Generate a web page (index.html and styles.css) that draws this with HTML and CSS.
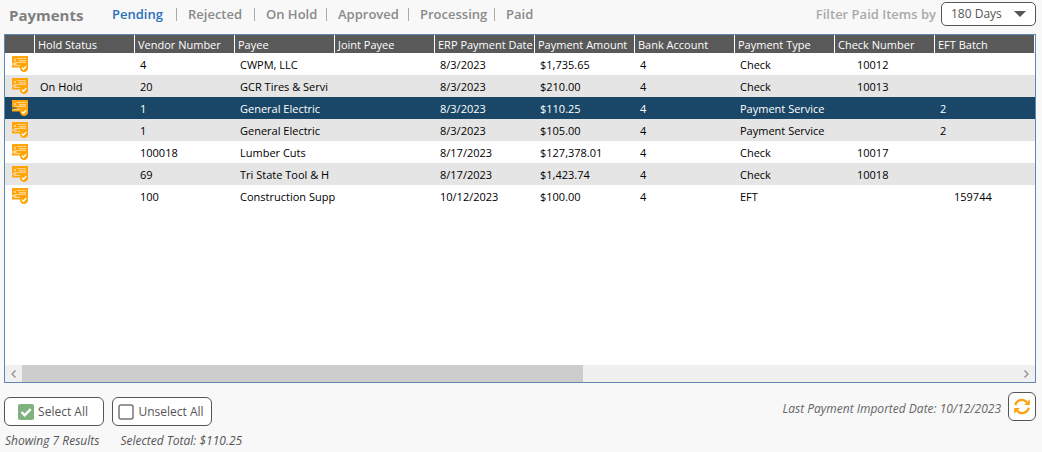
FILE: index.html
```html
<!DOCTYPE html>
<html lang="en">
<head>
<meta charset="utf-8">
<title>Payments</title>
<link rel="stylesheet" href="styles.css">
</head>
<body>
<svg class="defs" aria-hidden="true">
  <symbol id="payment" viewBox="0 0 16 16">
    <path fill="#ffa50a" d="M0 0h16v11H8.500v.5H0V8.500h4.600V7.500H0z"/>
    <path class="lines" d="M2 3h2v2h-2zM5 2h9v1H5zM7 4h7v1.500H7zM2 6h12v1H2zM2 9h6v1H2z"/>
    <circle cx="12" cy="11.700" r="4.200" fill="#ffa50a"/>
    <path fill="none" stroke="#fff" stroke-width="1.300" d="M9.900 11.800l1.500 1.500 2.900-3.200"/>
  </symbol>
</svg>
<header class="toolbar">
  <h1 class="title">Payments</h1>
  <nav class="tabs">
    <a class="tab active" href="#">Pending</a>
    <a class="tab" href="#">Rejected</a>
    <a class="tab" href="#">On Hold</a>
    <a class="tab" href="#">Approved</a>
    <a class="tab" href="#">Processing</a>
    <a class="tab" href="#">Paid</a>
  </nav>
  <label class="filter-label" for="days">Filter Paid Items by</label>
  <div class="select-wrap">
    <select id="days" class="select"><option>180 Days</option></select>
    <svg class="arrow" viewBox="0 0 12 6" aria-hidden="true"><path d="M0 0h12L6 6z" fill="#555"/></svg>
  </div>
</header>
<main class="panel">
  <table class="grid">
    <colgroup><col class="c-icon"><col class="c"><col class="c"><col class="c"><col class="c"><col class="c"><col class="c"><col class="c"><col class="c"><col class="c"><col></colgroup>
    <thead>
      <tr><th></th><th>Hold Status</th><th>Vendor Number</th><th>Payee</th><th>Joint Payee</th><th>ERP Payment Date</th><th>Payment Amount</th><th>Bank Account</th><th>Payment Type</th><th>Check Number</th><th>EFT Batch</th></tr>
    </thead>
    <tbody>
      <tr><td><svg class="icon"><use href="#payment"/></svg></td><td></td><td>4</td><td>CWPM, LLC</td><td></td><td>8/3/2023</td><td>$1,735.65</td><td>4</td><td>Check</td><td class="check">10012</td><td></td></tr>
      <tr><td><svg class="icon"><use href="#payment"/></svg></td><td>On Hold</td><td>20</td><td>GCR Tires &amp; Servi</td><td></td><td>8/3/2023</td><td>$210.00</td><td>4</td><td>Check</td><td class="check">10013</td><td></td></tr>
      <tr class="selected"><td><svg class="icon"><use href="#payment"/></svg></td><td></td><td>1</td><td>General Electric</td><td></td><td>8/3/2023</td><td>$110.25</td><td>4</td><td>Payment Service</td><td></td><td>2</td></tr>
      <tr><td><svg class="icon"><use href="#payment"/></svg></td><td></td><td>1</td><td>General Electric</td><td></td><td>8/3/2023</td><td>$105.00</td><td>4</td><td>Payment Service</td><td></td><td>2</td></tr>
      <tr><td><svg class="icon"><use href="#payment"/></svg></td><td></td><td>100018</td><td>Lumber Cuts</td><td></td><td>8/17/2023</td><td>$127,378.01</td><td>4</td><td>Check</td><td class="check">10017</td><td></td></tr>
      <tr><td><svg class="icon"><use href="#payment"/></svg></td><td></td><td>69</td><td>Tri State Tool &amp; H</td><td></td><td>8/17/2023</td><td>$1,423.74</td><td>4</td><td>Check</td><td class="check">10018</td><td></td></tr>
      <tr><td><svg class="icon"><use href="#payment"/></svg></td><td></td><td>100</td><td>Construction Supp</td><td></td><td>10/12/2023</td><td>$100.00</td><td>4</td><td>EFT</td><td></td><td class="batch">159744</td></tr>
    </tbody>
  </table>
  <div class="scrollbar">
    <button class="scroll-btn" aria-label="Scroll left"><svg width="5" height="8" viewBox="0 0 5 8"><path d="M4.500.5L1 4l3.500 3.500"/></svg></button>
    <div class="track"><div class="thumb"></div></div>
    <button class="scroll-btn" aria-label="Scroll right"><svg width="5" height="8" viewBox="0 0 5 8"><path d="M.5.5L4 4 .5 7.500"/></svg></button>
  </div>
</main>
<footer class="footer">
  <div class="left">
    <div class="buttons">
      <button class="btn"><svg width="16" height="16" viewBox="0 0 16 16"><rect width="16" height="16" rx="2" fill="#7fb27f"/><path d="M3.500 8l3.200 3.200 6-6" fill="none" stroke="#fff" stroke-width="2.400"/></svg>Select All</button>
      <button class="btn"><svg width="16" height="16" viewBox="0 0 16 16"><rect x="1" y="1" width="14" height="14" rx="2" fill="#fff" stroke="#777" stroke-width="1.500"/></svg>Unselect All</button>
    </div>
    <div class="status"><span>Showing 7 Results</span><span>Selected Total: $110.25</span></div>
  </div>
  <div class="right">
    <span class="note">Last Payment Imported Date: 10/12/2023</span>
    <button class="refresh" aria-label="Refresh"><svg width="16" height="17" viewBox="0 0 16 17"><g fill="none" stroke="#ffa010" stroke-width="2.400"><path d="M1.300 7.200A6.600 6.600 0 0 1 12.800 4.300"/><path d="M14.700 9.800A6.600 6.600 0 0 1 3.200 12.700"/></g><path fill="#ffa010" d="M15.800 1.300v5.600h-5.600zM.2 15.700v-5.600h5.600z"/></svg></button>
  </div>
</footer>
</body>
</html>
```
FILE: styles.css
```css
* { box-sizing: border-box; }
html, body { height: 100%; }
body {
  margin: 0;
  padding: 0 6px 0 4px;
  display: flex;
  flex-direction: column;
  background: #f8f8f8;
  color: #000;
  font: 12px/16px "Open Sans", "Noto Sans", sans-serif;
}
button, select { font: inherit; color: #555; }
.defs { position: absolute; width: 0; height: 0; }
.toolbar { display: flex; align-items: center; height: 34px; padding-bottom: 6px; flex: none; }
.title { width: 103px; margin: 0; padding: 2px 0 0 5px; font-size: 15px; line-height: 20px; font-weight: 700; color: #7f7f7f; }
.tabs { display: grid; grid-template-columns: 76px 78px 72px 82px 86px auto; padding-left: 5px; font-size: 13px; line-height: 18px; }
.tab { display: flex; justify-content: space-between; color: #8a8a8a; font-weight: 600; text-decoration: none; }
.tab:not(:last-child)::after { content: ""; width: 1px; height: 13px; margin: 3px 11px 0 0; background: #aaa; }
.tab.active { color: #2a70b8; }
.filter-label { margin-left: auto; margin-right: 5px; color: #aaa; font-size: 13px; font-weight: 600; }
.select-wrap { display: grid; width: 95px; align-items: center; }
.select { grid-area: 1 / 1; appearance: none; width: 100%; height: 24px; padding: 0 9px; border: 1px solid #555; border-radius: 5px; background: #fff; }
.arrow { grid-area: 1 / 1; justify-self: end; width: 12px; height: 6px; margin-right: 10px; pointer-events: none; }

.panel { flex: none; display: flex; flex-direction: column; min-height: 349px; border: 1px solid #5f87b0; background: #fff; }
.grid { width: 100%; table-layout: fixed; border-collapse: separate; border-spacing: 0; font-size: 11px; }
.c-icon { width: 30px; }
.c { width: 100px; }
.grid th { height: 18px; padding: 1px 0 0 3px; border-right: 1px solid #fff; background: #595959; color: #fff; font-weight: 400; text-align: left; line-height: 17px; white-space: nowrap; overflow: hidden; }
.grid td { height: 22px; padding: 1px 0 0 5px; line-height: 21px; white-space: nowrap; overflow: hidden; }
.grid td:first-child { padding: 0 0 0 7px; }
.grid .check { padding-left: 22px; }
.grid .batch { padding-left: 19px; }
.grid tbody tr:nth-child(even) { background: #e5e5e5; }
.grid .selected { background: #1a4767; color: #fff; }
.icon { display: block; width: 16px; height: 16px; }
.lines { fill: #fff; opacity: .5; }
.selected .lines { fill: #1a4767; }
.scrollbar { display: flex; height: 17px; margin-top: auto; background: #f0f0f0; }
.scroll-btn { display: grid; place-items: center; width: 17px; padding: 0; border: 0; background: none; }
.scroll-btn path { fill: none; stroke: #999; stroke-width: 1.5; }
.track { flex: 1; }
.thumb { width: 56.3%; height: 100%; background: #cdcdcd; }

.footer { display: flex; justify-content: space-between; padding-top: 9px; }
.left { padding-top: 5px; }
.buttons { display: flex; gap: 8px; }
.btn { display: flex; align-items: center; justify-content: center; gap: 4px; width: 100px; height: 29px; padding: 0 2px 0 0; border: 1px solid #555; border-radius: 6px; background: #fff; white-space: nowrap; }
.status { display: flex; gap: 21px; margin-top: 7px; padding-left: 1px; font-style: italic; color: #555; }
.right { display: flex; align-items: flex-start; gap: 7px; }
.note { padding-top: 9px; font-style: italic; color: #666; }
.refresh { display: grid; place-items: center; width: 28px; height: 29px; padding: 0; border: 1px solid #555; border-radius: 6px; background: #fff; }
```
